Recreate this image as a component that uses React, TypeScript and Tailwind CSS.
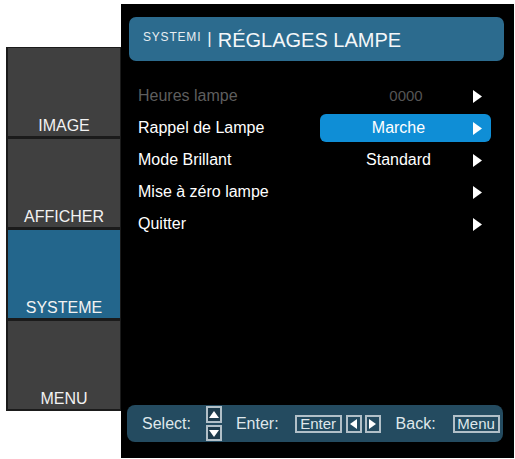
import React from "react";

function RightTri({ className = "" }: { className?: string }) {
  return (
    <svg width="9" height="13" viewBox="0 0 9 13" className={className}>
      <polygon points="0,0 9,6.5 0,13" fill="#ffffff" />
    </svg>
  );
}

const rows = [
  { label: "Heures lampe", value: "0000", dim: true, selected: false },
  { label: "Rappel de Lampe", value: "Marche", dim: false, selected: true },
  { label: "Mode Brillant", value: "Standard", dim: false, selected: false },
  { label: "Mise à zéro lampe", value: "", dim: false, selected: false },
  { label: "Quitter", value: "", dim: false, selected: false },
];

const tiles = [
  { label: "IMAGE", active: false },
  { label: "AFFICHER", active: false },
  { label: "SYSTEME", active: true },
  { label: "MENU", active: false },
];

export default function App() {
  return (
    <div className="w-[515px] h-[459px] bg-white flex pl-[6px] pt-[4px] font-['Liberation_Sans',Arial,sans-serif] overflow-hidden">
      {/* Sidebar */}
      <div className="mt-[43px] w-[115px] h-[364px] bg-[#1b1b1b] flex flex-col gap-[3px] pl-[2px] pr-[1px] pt-[1px] pb-[2px] shrink-0">
        {tiles.map((t) => (
          <div
            key={t.label}
            className={
              t.active
                ? "flex-1 bg-[#23668c] flex items-end justify-center pb-[1px]"
                : "flex-1 bg-[#404040] flex items-end justify-center pb-[1px]"
            }
          >
            <span className="text-[16px] leading-[18px] text-[#f2f2f2]">{t.label}</span>
          </div>
        ))}
      </div>

      {/* Main panel */}
      <div className="w-[393px] h-[454px] bg-black flex flex-col pt-[13px] pl-[8px] pr-[10px] shrink-0">
        {/* Header */}
        <div className="h-[44px] rounded-[7px] bg-[#2c6b8e] flex items-start pt-[13px] pl-[14px]">
          <span className="mt-[1px] text-[12px] leading-[12px] tracking-[0.8px] text-[#e8eef2]">SYSTEMI</span>
          <span className="ml-[6px] text-[17px] leading-[17px] text-[#f0f4f6]">|</span>
          <span className="ml-[6px] text-[20px] leading-[20px] text-[#f4f7f9]">RÉGLAGES LAMPE</span>
        </div>

        {/* Rows */}
        <div className="mt-[19px] flex flex-col">
          {rows.map((r) => (
            <div key={r.label} className="h-[32px] flex items-center pl-[9px] pr-[13px]">
              <span
                className={
                  r.dim
                    ? "flex-1 text-[16px] leading-[18px] text-[#5e5e5e]"
                    : "flex-1 text-[16px] leading-[18px] text-white"
                }
              >
                {r.label}
              </span>
              <div
                className={
                  r.selected
                    ? "w-[171px] h-[28px] rounded-[6px] bg-[#0f8ed6] flex items-center pl-[4px] pr-[9px]"
                    : "w-[171px] h-[28px] flex items-center pl-[4px] pr-[9px]"
                }
              >
                <span
                  className={
                    r.dim
                      ? "w-[149px] pl-[15px] text-center text-[15px] leading-[18px] text-[#555555]"
                      : "w-[149px] text-center text-[16px] leading-[18px] text-white"
                  }
                >
                  {r.value}
                </span>
                <RightTri />
              </div>
            </div>
          ))}
        </div>

        {/* Footer */}
        <div className="mt-auto mb-[16px] -ml-[2px] mr-[1px] h-[37px] rounded-[8px] bg-[#244b60] flex items-center pl-[15px] text-[16px] leading-[18px] text-[#dfe7eb]">
          <span>Select:</span>
          <div className="ml-[15px] flex flex-col gap-[2px]">
            <div className="w-[16px] h-[17px] border-2 border-[#b2c0c8] bg-[#1d3b4c] flex items-center justify-center">
              <svg width="10" height="7" viewBox="0 0 10 7">
                <polygon points="0,7 5,0 10,7" fill="#ffffff" />
              </svg>
            </div>
            <div className="w-[16px] h-[16px] border-2 border-[#b2c0c8] bg-[#1d3b4c] flex items-center justify-center">
              <svg width="10" height="7" viewBox="0 0 10 7">
                <polygon points="0,0 10,0 5,7" fill="#ffffff" />
              </svg>
            </div>
          </div>
          <span className="ml-[14px]">Enter:</span>
          <div className="ml-[16px] w-[47px] h-[18px] border-2 border-[#b2c0c8] flex items-center justify-center">
            <span className="text-[15px] leading-[13px]">Enter</span>
          </div>
          <div className="ml-[4px] w-[16px] h-[18px] border-2 border-[#b2c0c8] flex items-center justify-center">
            <svg width="7" height="10" viewBox="0 0 7 10">
              <polygon points="7,0 0,5 7,10" fill="#ffffff" />
            </svg>
          </div>
          <div className="ml-[3px] w-[16px] h-[18px] border-2 border-[#b2c0c8] flex items-center justify-center">
            <svg width="7" height="10" viewBox="0 0 7 10">
              <polygon points="0,0 7,5 0,10" fill="#ffffff" />
            </svg>
          </div>
          <span className="ml-[15px]">Back:</span>
          <div className="ml-[17px] w-[47px] h-[18px] border-2 border-[#b2c0c8] flex items-center justify-center">
            <span className="text-[15px] leading-[13px]">Menu</span>
          </div>
        </div>
      </div>
    </div>
  );
}
